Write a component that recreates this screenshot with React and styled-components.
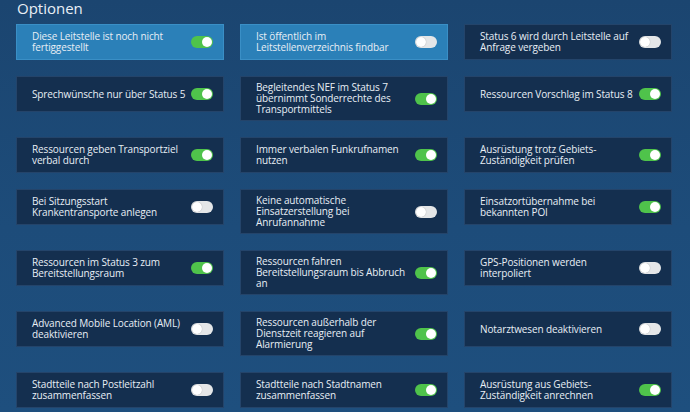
import React from 'react'
import styled, { createGlobalStyle } from 'styled-components'

const GlobalStyle = createGlobalStyle`
  html, body {
    margin: 0;
    padding: 0;
  }
  body {
    width: 690px;
    height: 412px;
    overflow: hidden;
    background: linear-gradient(180deg, #1b4570 0%, #1d4c7a 55%, #1e4f7e 100%);
    font-family: "Open Sans", "Liberation Sans", sans-serif;
    color: #e6edf4;
  }
`

const Page = styled.div`
  padding: 0 18px 0 16px;
`

const Title = styled.h2`
  margin: 0;
  padding: 0 0 0 1px;
  font-size: 15px;
  line-height: 16px;
  font-weight: 400;
  color: #e9eff6;
`

const Grid = styled.div`
  margin-top: 8px;
  display: grid;
  grid-template-columns: repeat(3, 208px);
  column-gap: 16px;
  row-gap: 16px;
  align-items: start;
`

const Card = styled.div`
  box-sizing: border-box;
  min-height: 36px;
  padding: 5px 10px 5px 15px;
  display: flex;
  align-items: center;
  gap: 5px;
  background: ${p => (p.$highlight ? '#2b80b8' : '#142f4f')};
  border: 1px solid ${p => (p.$highlight ? '#3a8fc6' : '#24446a')};
`

const Label = styled.span`
  flex: 1;
  font-size: 10px;
  line-height: 11px;
  letter-spacing: -0.12px;
  color: #e8eef5;
`

const Switch = styled.span`
  position: relative;
  flex-shrink: 0;
  width: 22px;
  height: 12px;
  border-radius: 6px;
  background: ${p => (p.$on ? '#4fc34b' : '#e4e6e8')};

  &::after {
    content: '';
    position: absolute;
    top: 1px;
    left: ${p => (p.$on ? '11px' : '1px')};
    width: 10px;
    height: 10px;
    border-radius: 50%;
    background: #fff;
    box-shadow: ${p => (p.$on ? 'none' : '0 0 1px rgba(0,0,0,0.35)')};
  }
`

const options = [
  ['Diese Leitstelle ist noch nicht fertiggestellt', true, true],
  ['Ist öffentlich im Leitstellenverzeichnis findbar', false, true],
  ['Status 6 wird durch Leitstelle auf Anfrage vergeben', false],
  ['Sprechwünsche nur über Status 5', true],
  ['Begleitendes NEF im Status 7 übernimmt Sonderrechte des Transportmittels', true],
  ['Ressourcen Vorschlag im Status 8', true],
  ['Ressourcen geben Transportziel verbal durch', true],
  ['Immer verbalen Funkrufnamen nutzen', true],
  ['Ausrüstung trotz Gebiets-Zuständigkeit prüfen', true],
  ['Bei Sitzungsstart Krankentransporte anlegen', false],
  ['Keine automatische Einsatzerstellung bei Anrufannahme', false],
  ['Einsatzortübernahme bei bekannten POI', true],
  ['Ressourcen im Status 3 zum Bereitstellungsraum', true],
  ['Ressourcen fahren Bereitstellungsraum bis Abbruch an', true],
  ['GPS-Positionen werden interpoliert', false],
  ['Advanced Mobile Location (AML) deaktivieren', false],
  ['Ressourcen außerhalb der Dienstzeit reagieren auf Alarmierung', true],
  ['Notarztwesen deaktivieren', false],
  ['Stadtteile nach Postleitzahl zusammenfassen', false],
  ['Stadtteile nach Stadtnamen zusammenfassen', true],
  ['Ausrüstung aus Gebiets-Zuständigkeit anrechnen', true],
]

export default function App() {
  return (
    <Page>
      <GlobalStyle />
      <Title>Optionen</Title>
      <Grid>
        {options.map(([label, on, highlight]) => (
          <Card key={label} $highlight={highlight}>
            <Label>{label}</Label>
            <Switch $on={on} />
          </Card>
        ))}
      </Grid>
    </Page>
  )
}
